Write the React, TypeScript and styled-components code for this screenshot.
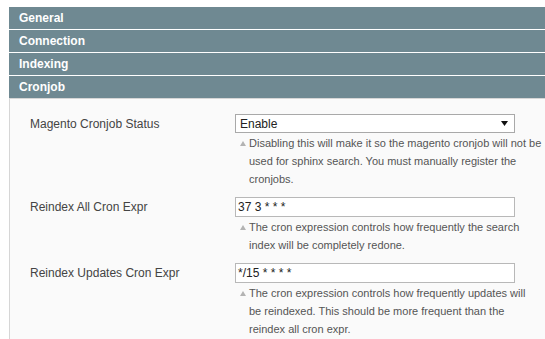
import React from 'react';
import styled, { createGlobalStyle } from 'styled-components';

const Global = createGlobalStyle`
  html, body { margin: 0; padding: 0; background: #fff; }
  body { font-family: "Liberation Sans", Arial, sans-serif; }
`;

const Page = styled.div`
  padding: 7px 0 0 9px;
`;

const SectionHead = styled.div<{ $open?: boolean }>`
  height: 22px;
  background: #6f8992;
  color: #fff;
  font: bold 12px/22px "Liberation Sans", Arial, sans-serif;
  padding-left: 10px;
  margin-bottom: ${(p) => (p.$open ? '0' : '1px')};
`;

const Fieldset = styled.div`
  border-top: 1px solid #d6d6d6;
  border-left: 1px solid #d6d6d6;
  background: #fafafa;
  padding: 15px 0 12px 20px;
  display: grid;
  grid-template-columns: 205px 310px;
  row-gap: 9px;
`;

const Label = styled.div`
  font-size: 12px;
  line-height: 20px;
  color: #444;
`;

const Value = styled.div`
  display: flex;
  flex-direction: column;
`;

const SelectBox = styled.div`
  box-sizing: border-box;
  width: 280px;
  height: 19px;
  border: 1px solid #a9a9a9;
  background: #fff;
  display: flex;
  align-items: center;
  justify-content: space-between;
  padding: 0 6px 0 4px;
  font-size: 12px;
  color: #222;
`;

const Input = styled.div`
  box-sizing: border-box;
  width: 280px;
  height: 20px;
  border: 1px solid #b8b8b8;
  background: #fff;
  padding: 0 2px;
  font-size: 12px;
  line-height: 18px;
  color: #222;
`;

const Hint = styled.div`
  display: flex;
  margin-top: 1px;
  font-size: 11px;
  line-height: 18px;
  color: #555;
`;

const HintIcon = styled.span`
  flex: 0 0 14px;
  display: flex;
  align-items: flex-start;
  padding: 7px 0 0 5px;
  box-sizing: border-box;
  height: 18px;
`;

const HintText = styled.span`
  flex: 1;
  min-width: 0;
  white-space: nowrap;
`;

const Arrow = () => (
  <svg width="6" height="5" viewBox="0 0 6 5">
    <path d="M3 0 L6 5 L0 5 Z" fill="#b3b3b3" />
  </svg>
);

const DownArrow = () => (
  <svg width="7" height="5" viewBox="0 0 7 5">
    <path d="M0 0 L7 0 L3.5 5 Z" fill="#111" />
  </svg>
);

const Note = ({ lines }: { lines: string[] }) => (
  <Hint>
    <HintIcon>
      <Arrow />
    </HintIcon>
    <HintText>
      {lines.map((l, i) => (
        <React.Fragment key={i}>
          {i > 0 && <br />}
          {l}
        </React.Fragment>
      ))}
    </HintText>
  </Hint>
);

export default function App() {
  return (
    <Page>
      <Global />
      <SectionHead>General</SectionHead>
      <SectionHead>Connection</SectionHead>
      <SectionHead>Indexing</SectionHead>
      <SectionHead $open>Cronjob</SectionHead>
      <Fieldset>
        <Label>Magento Cronjob Status</Label>
        <Value>
          <SelectBox>
            <span>Enable</span>
            <DownArrow />
          </SelectBox>
          <Note
            lines={[
              'Disabling this will make it so the magento cronjob will not be',
              'used for sphinx search. You must manually register the',
              'cronjobs.',
            ]}
          />
        </Value>

        <Label>Reindex All Cron Expr</Label>
        <Value>
          <Input>37 3 * * *</Input>
          <Note
            lines={[
              'The cron expression controls how frequently the search',
              'index will be completely redone.',
            ]}
          />
        </Value>

        <Label>Reindex Updates Cron Expr</Label>
        <Value>
          <Input>*/15 * * * *</Input>
          <Note
            lines={[
              'The cron expression controls how frequently updates will',
              'be reindexed. This should be more frequent than the',
              'reindex all cron expr.',
            ]}
          />
        </Value>
      </Fieldset>
    </Page>
  );
}
